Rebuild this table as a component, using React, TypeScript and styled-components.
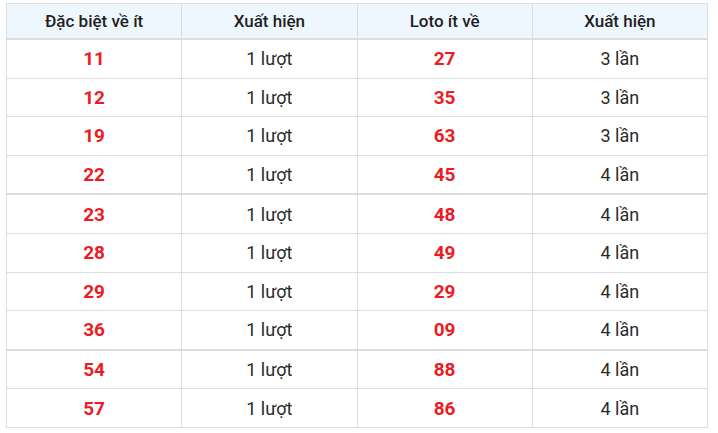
import React from "react";
import styled, { createGlobalStyle } from "styled-components";

const Global = createGlobalStyle`
  html, body { margin: 0; padding: 0; background: #ffffff; }
  body { font-family: Roboto, "Noto Sans", "Liberation Sans", sans-serif; }
`;

const Wrap = styled.div`
  padding: 3px 10px 0 6px;
`;

const Table = styled.table`
  width: 702px;
  border-collapse: collapse;
  table-layout: fixed;
  border: 1px solid #dcdde2;
`;

const HeadCell = styled.th`
  height: 34px;
  padding: 0;
  background: #eef6fe;
  color: #1f1f1f;
  font-size: 17px;
  font-weight: 500;
  text-align: center;
  border: 1px solid #dcdde2;
  border-bottom: 2px solid #dcdde2;
`;

const Row = styled.tr<{ $thick?: boolean }>`
  & > td {
    border-bottom: ${(p) => (p.$thick ? "2px" : "1px")} solid #dcdde2;
  }
`;

const Cell = styled.td<{ $num?: boolean }>`
  height: 37.6px;
  padding: 0;
  text-align: center;
  border-left: 1px solid #dcdde2;
  border-right: 1px solid #dcdde2;
  font-size: ${(p) => (p.$num ? "19px" : "18px")};
  font-weight: ${(p) => (p.$num ? 700 : 400)};
  color: ${(p) => (p.$num ? "#ec1c24" : "#2b2b2b")};
`;

const rows: [string, string, string, string][] = [
  ["11", "1 lượt", "27", "3 lần"],
  ["12", "1 lượt", "35", "3 lần"],
  ["19", "1 lượt", "63", "3 lần"],
  ["22", "1 lượt", "45", "4 lần"],
  ["23", "1 lượt", "48", "4 lần"],
  ["28", "1 lượt", "49", "4 lần"],
  ["29", "1 lượt", "29", "4 lần"],
  ["36", "1 lượt", "09", "4 lần"],
  ["54", "1 lượt", "88", "4 lần"],
  ["57", "1 lượt", "86", "4 lần"],
];

export default function App() {
  return (
    <Wrap>
      <Global />
      <Table>
        <thead>
          <tr>
            <HeadCell>Đặc biệt về ít</HeadCell>
            <HeadCell>Xuất hiện</HeadCell>
            <HeadCell>Loto ít về</HeadCell>
            <HeadCell>Xuất hiện</HeadCell>
          </tr>
        </thead>
        <tbody>
          {rows.map((r, i) => (
            <Row key={i} $thick={i === 3 || i === 7}>
              <Cell $num>{r[0]}</Cell>
              <Cell>{r[1]}</Cell>
              <Cell $num>{r[2]}</Cell>
              <Cell>{r[3]}</Cell>
            </Row>
          ))}
        </tbody>
      </Table>
    </Wrap>
  );
}
